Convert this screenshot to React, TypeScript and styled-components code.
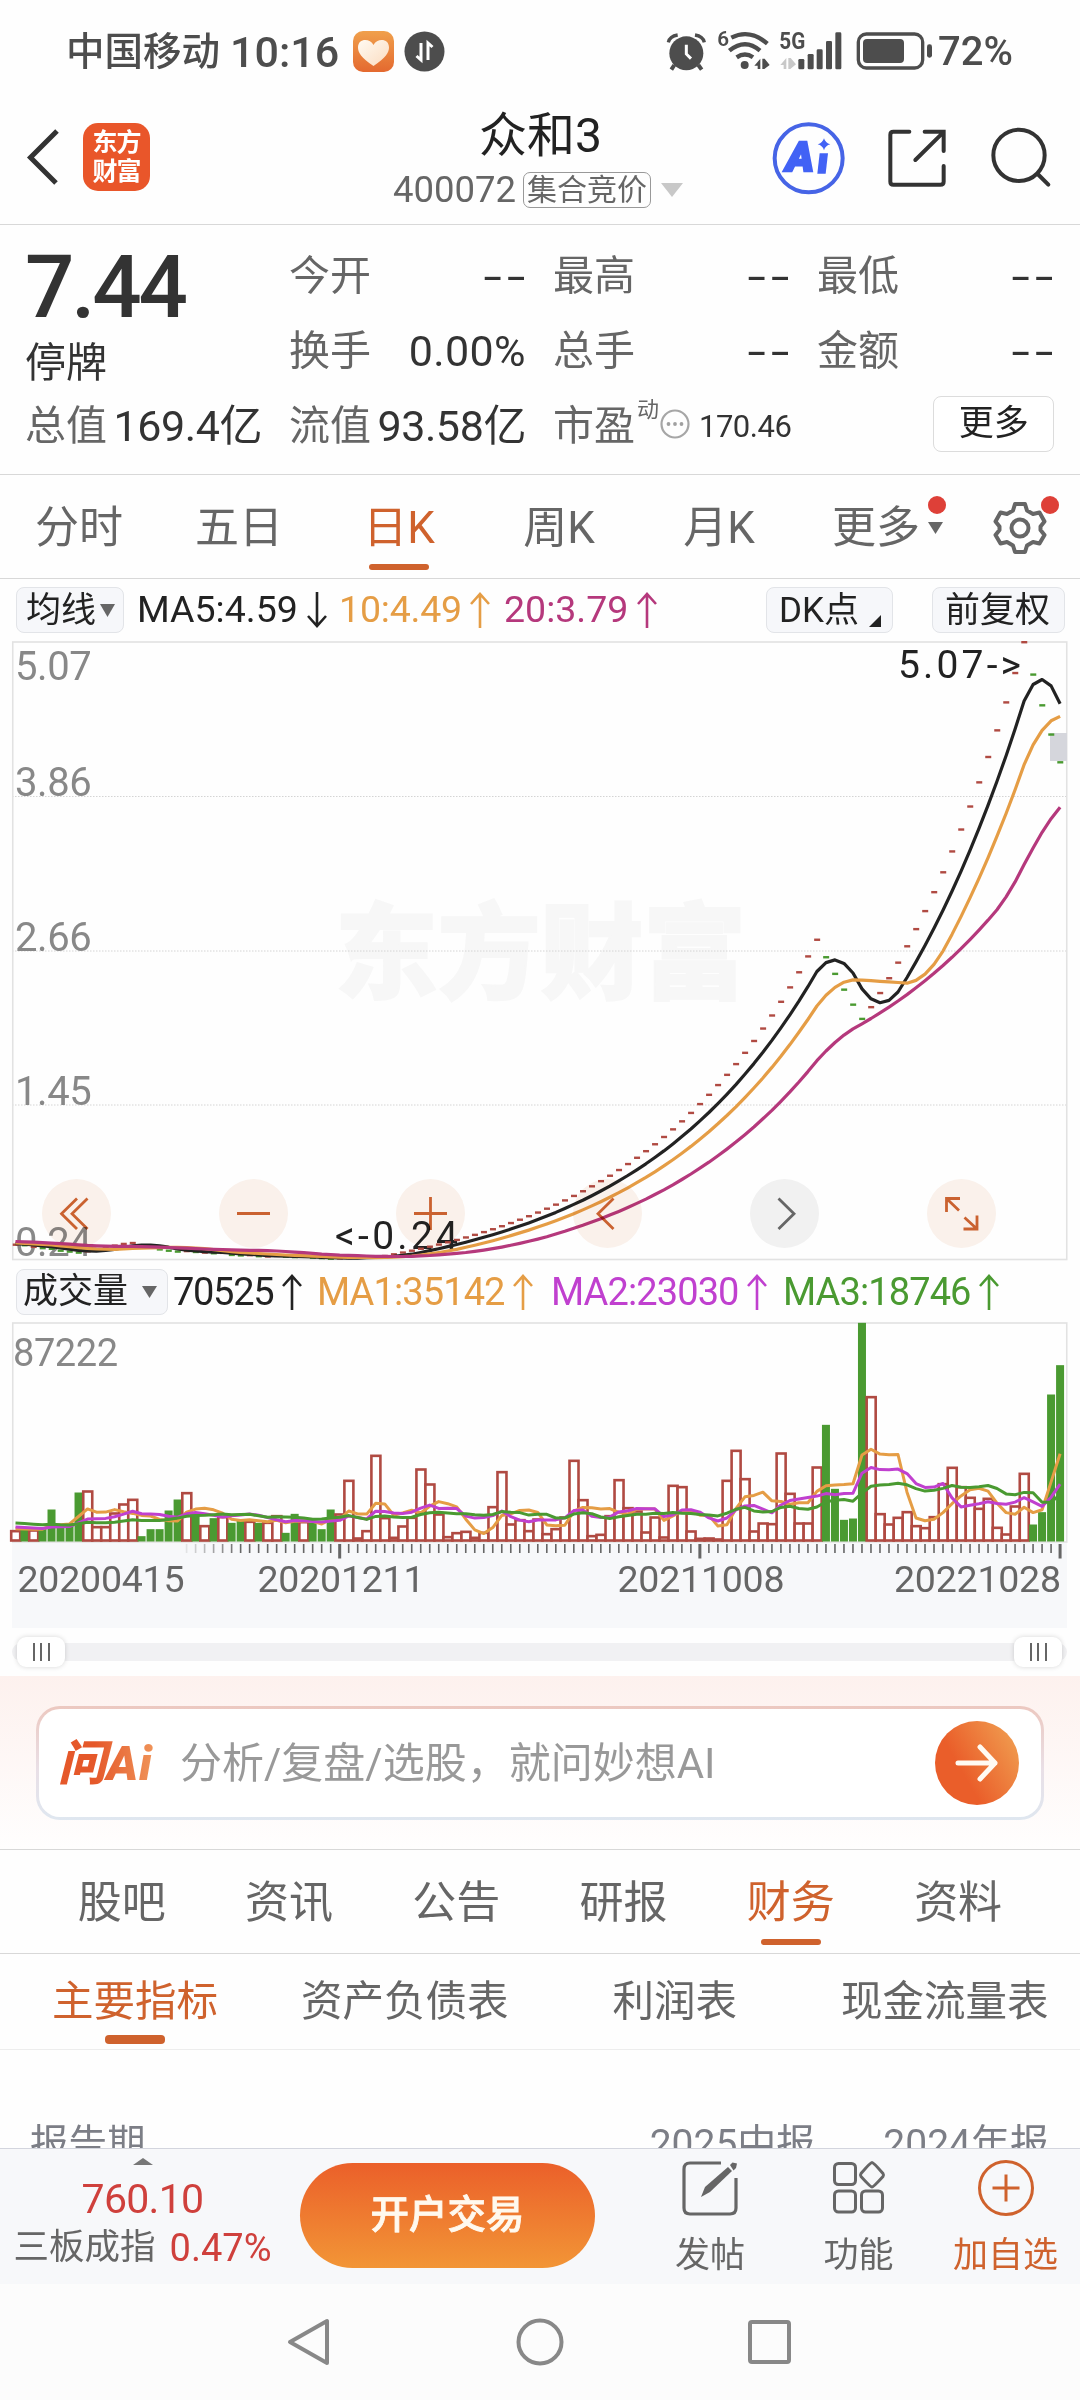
import React from 'react';
import styled, { createGlobalStyle } from 'styled-components';

const FONT = `Roboto, "Noto Sans CJK SC", sans-serif`;
const ACCENT = '#cf622d';
const GREY = '#666666';
const INK = '#222222';
const ORANGE = '#e59d45';
const MAGENTA = '#b5387c';
const PURPLE = '#c040cf';
const GREEN = '#4a9a31';
const RED = '#b04a42';

const Global = createGlobalStyle`
  * { box-sizing: border-box; }
  body { margin: 0; background: #fefefe; font-family: ${FONT}; }
  svg { display: block; flex: none; overflow: visible; }
`;

const Screen = styled.main`
  width: 1080px;
  height: 2400px;
  overflow: hidden;
  display: flex;
  flex-direction: column;
  color: ${INK};
  line-height: 1;
  white-space: nowrap;
`;

const Label = styled.span<{ $s: number; $c?: string; $w?: number; $ls?: number; $ml?: number }>`
  font-size: ${p => p.$s}px;
  color: ${p => p.$c ?? 'inherit'};
  font-weight: ${p => p.$w ?? 400};
  letter-spacing: ${p => p.$ls ?? 0}px;
  margin-left: ${p => p.$ml ?? 0}px;
  line-height: 1;
`;

/* ---------- status bar ---------- */
const StatusBar = styled.header`
  height: 92px;
  padding: 12px 67px 0 66px;
  display: flex;
  align-items: center;
  justify-content: space-between;
  color: #4d4d4d;
`;
const StatusGroup = styled.div`
  display: flex;
  align-items: center;
`;

function StatusIcons() {
  return (
    <svg width="271" height="46" viewBox="54 26 813 138" fill="#4d4d4d">
      <circle cx="112" cy="99" r="51" />
      <path d="M58 66Q62 48 86 44M166 66Q162 48 138 44" stroke="#4d4d4d" strokeWidth="10" fill="none" />
      <path d="M76 134L67 148M148 134L158 148" stroke="#4d4d4d" strokeWidth="12" />
      <path d="M112 73V101L126 115" stroke="#fff" strokeWidth="9" fill="none" />
      <text x="205" y="78" fontSize="62" fontWeight="600" fontFamily={FONT}>6</text>
      <g fill="none" stroke="#4d4d4d" strokeWidth="13">
        <path d="M247 52Q302 24 355 70" />
        <path d="M241 91Q289 52 333 91" />
        <path d="M263 111Q288 94 312 111" />
      </g>
      <circle cx="287" cy="134" r="12" />
      <path d="M316 136L334 115V146H326V136ZM340 115H347L362 134L346 146H340Z" />
      <text x="391" y="87" fontSize="70" fontWeight="700" fontFamily={FONT} textLength="78" lengthAdjust="spacingAndGlyphs">5G</text>
      <path d="M394 134L412 113V146H404V134ZM418 113H425L441 132L424 146H418Z" fill="#c8c8c8" />
      <rect x="448" y="116" width="18" height="31" rx="4" />
      <rect x="476" y="101" width="18" height="46" rx="4" />
      <rect x="503" y="87" width="18" height="60" rx="4" />
      <rect x="531" y="62" width="18" height="85" rx="4" />
      <rect x="559" y="36" width="18" height="111" rx="4" />
      <rect x="628" y="41" width="193" height="102" rx="24" fill="none" stroke="#4d4d4d" strokeWidth="10" />
      <rect x="642" y="56" width="123" height="72" rx="12" />
      <rect x="834" y="72" width="15" height="40" rx="7" />
    </svg>
  );
}

/* ---------- title bar ---------- */
const TitleBar = styled.header`
  height: 133px;
  padding: 0 32px 0 25px;
  display: grid;
  grid-template-columns: 125px 1fr 276px;
  border-bottom: 1.5px solid #d8d8d8;
`;
const BackGroup = styled.div`
  display: flex;
  gap: 25px;
  padding-top: 31px;
`;
const Logo = styled.div`
  width: 68px;
  height: 68px;
  border-radius: 15px;
  background: #e9562a;
  color: #fff;
  display: flex;
  flex-direction: column;
  align-items: center;
  justify-content: center;
  gap: 2px;
  font-weight: 700;
  font-size: 25px;
  letter-spacing: -1px;
  line-height: 27px;
`;
const TitleColumn = styled.div`
  display: flex;
  flex-direction: column;
  padding: 20px 0 0 243px;
`;
const SubTitle = styled.div`
  display: flex;
  align-items: center;
  height: 38px;
  margin-top: 11px;
`;
const Tag = styled.span`
  border: 1.5px solid #999;
  border-radius: 7px;
  height: 36px;
  width: 128px;
  margin: 0 10px 0 7px;
  font-size: 30px;
  line-height: 34px;
  text-align: center;
  color: ${GREY};
`;
const HeaderIcons = styled.div`
  display: flex;
  align-items: flex-start;
  padding-top: 27px;
`;

/* ---------- quote ---------- */
const Quote = styled.section`
  height: 250px;
  border-bottom: 1.5px solid #d8d8d8;
  display: grid;
  grid-template-columns: 237px 237px 237px 237px;
  grid-template-rows: 75px 75px 75px;
  column-gap: 27px;
  padding: 14px 0 0 25px;
  align-items: center;
`;
const PriceCell = styled.div`
  grid-row: span 2;
  align-self: start;
  display: flex;
  flex-direction: column;
  padding-top: 5px;
`;
const Cell = styled.div`
  display: flex;
  justify-content: space-between;
  align-items: center;
`;
const Dashes = styled.span`
  font-size: 43px;
  color: #333;
  letter-spacing: 3.3px;
  display: inline-block;
  transform: scaleX(1.54);
  transform-origin: right center;
  margin-right: -4px;
`;
const WideCell = styled.div`
  grid-column: span 2;
  display: flex;
  align-items: center;
`;
const Sup = styled.sup`
  font-size: 22px;
  line-height: 1;
  color: ${GREY};
  align-self: flex-start;
  margin: -3px 0 0 2px;
  vertical-align: baseline;
`;
const MoreButton = styled.button`
  width: 124px;
  height: 56px;
  margin: -6px 0 0 142px;
  border: 1.5px solid #dcdcdc;
  border-radius: 8px;
  background: #fff;
  font: 400 35px/50px ${FONT};
  color: ${INK};
  padding: 0;
`;

/* ---------- tabs ---------- */
const KTabs = styled.nav`
  height: 104px;
  border-bottom: 1.5px solid #d8d8d8;
  display: grid;
  grid-template-columns: repeat(6, 160px) 1fr;
  margin-left: -1px;
`;
const Tab = styled.div<{ $on?: boolean; $size: number; $bottom: number; $shift?: number; $bar?: number; $pl?: number; $ml?: number }>`
  position: relative;
  display: flex;
  align-items: center;
  justify-content: center;
  font-size: ${p => p.$size}px;
  padding-top: ${p => p.$shift ?? 2}px;
  padding-left: ${p => p.$pl ?? 0}px;
  margin-left: ${p => p.$ml ?? 0}px;
  color: ${p => (p.$on ? ACCENT : GREY)};
  &::after {
    content: '';
    display: ${p => (p.$on ? 'block' : 'none')};
    position: absolute;
    left: 50%;
    margin-left: -30px;
    bottom: ${p => p.$bottom}px;
    width: 60px;
    height: ${p => p.$bar ?? 6}px;
    border-radius: 4px;
    background: ${ACCENT};
  }
`;
const Dot = styled.i<{ $r: number; $t: number }>`
  position: absolute;
  width: 18px;
  height: 18px;
  border-radius: 50%;
  background: #de4038;
  right: ${p => p.$r}px;
  top: ${p => p.$t}px;
`;

/* ---------- chart ---------- */
const LegendRow = styled.div<{ $h: number; $pt?: number }>`
  height: ${p => p.$h}px;
  padding: ${p => p.$pt ?? 0}px 16px 0;
  display: flex;
  align-items: center;
`;
const Pill = styled.div<{ $w: number; $ml?: number; $pl?: number }>`
  position: relative;
  width: ${p => p.$w}px;
  height: 46px;
  margin-left: ${p => p.$ml ?? 0}px;
  padding-left: ${p => p.$pl ?? 9}px;
  border: 1.5px solid #e2e4e8;
  border-radius: 8px;
  background: #f6f7fa;
  display: flex;
  align-items: center;
  font-size: 35px;
  flex: none;
`;
const Slot = styled.div<{ $w: number; $c: string }>`
  width: ${p => p.$w}px;
  display: flex;
  align-items: center;
  color: ${p => p.$c};
  flex: none;
`;
const PriceArea = styled.div`
  position: relative;
  height: 619px;
`;
const Controls = styled.div`
  position: absolute;
  left: 42px;
  top: 538px;
  display: flex;
  gap: 108px;
  mix-blend-mode: multiply;
`;
const Control = styled.div<{ $grey?: boolean }>`
  width: 69px;
  height: 69px;
  border-radius: 50%;
  background: ${p => (p.$grey ? '#f2f2f2' : '#fbf2ec')};
`;
const AxisRow = styled.div`
  height: 85px;
  margin: 0 13px 0 12px;
  background: #f7f8fa;
`;
const SliderRow = styled.div`
  height: 48px;
  padding: 0 12px;
  display: flex;
  align-items: center;
`;
const SliderTrack = styled.div`
  width: 1055px;
  height: 18px;
  border-radius: 9px;
  background: #f1f1f3;
  display: flex;
  align-items: center;
  justify-content: space-between;
  padding: 0 5px;
`;
const Handle = styled.div`
  width: 48px;
  height: 30px;
  border-radius: 9px;
  background: #fff;
  box-shadow: 0 0 5px rgba(0, 0, 0, 0.16);
  display: flex;
  align-items: center;
  justify-content: center;
  gap: 5.5px;
`;
const Grip = styled.i`
  width: 2px;
  height: 18px;
  background: #666;
`;

/* ---------- AI prompt ---------- */
const Banner = styled.section`
  height: 173px;
  padding: 30px 36px 0;
  background: linear-gradient(#fdf1ee, #fffefe);
`;
const PromptBorder = styled.div`
  width: 1008px;
  height: 114px;
  padding: 3px;
  border-radius: 24px;
  background: linear-gradient(#ecc8c0, #e9dfe6 55%, #dfe7f0);
`;
const Prompt = styled.div`
  height: 108px;
  border-radius: 21px;
  background: #fff;
  display: flex;
  align-items: center;
  padding: 2px 22px 0 19px;
`;
const AskLogo = styled.div`
  width: 122px;
  font-size: 48px;
  line-height: 56px;
  font-weight: 900;
  font-style: italic;
  letter-spacing: 0.6px;
  background: linear-gradient(90deg, #e5582a 30%, #f0955a 80%);
  background-clip: text;
  -webkit-background-clip: text;
  color: transparent;
`;
const Go = styled.div`
  width: 84px;
  height: 84px;
  margin: -2px 0 0 auto;
  border-radius: 50%;
  background: linear-gradient(60deg, #ea5e2a 35%, #f09a4e 90%);
  display: flex;
  align-items: center;
  justify-content: center;
`;

/* ---------- info tabs ---------- */
const InfoTabs = styled.nav`
  height: 105px;
  border-top: 1.5px solid #d8d8d8;
  border-bottom: 1.5px solid #d8d8d8;
  display: grid;
  grid-template-columns: repeat(6, 167.3px);
  padding-left: 38px;
`;
const SubTabs = styled.nav`
  height: 96px;
  border-bottom: 1.5px solid #ededed;
  display: flex;
`;
const TableHead = styled.div`
  height: 98px;
  overflow: hidden;
  display: grid;
  grid-template-columns: 1fr auto auto;
  column-gap: 68px;
  padding: 75px 31px 0 30px;
  color: #7c7e86;
`;

/* ---------- bottom ---------- */
const BottomBar = styled.footer`
  height: 136px;
  background: #f7f8fa;
  border-top: 1.5px solid #d3d5de;
  display: flex;
`;
const IndexBox = styled.div`
  width: 300px;
  flex: none;
  padding: 9px 24px 0 9px;
  display: flex;
  flex-direction: column;
  align-items: center;
`;
const TradeButton = styled.button`
  width: 295px;
  height: 105px;
  flex: none;
  margin-top: 14px;
  padding: 0;
  border: 0;
  border-radius: 53px;
  background: linear-gradient(#eb602a, #f29536);
  color: #fff9ee;
  font: 500 38.5px/1 ${FONT};
  -webkit-text-stroke: 0.8px #fff9ee;
`;
const Action = styled.div<{ $w: number; $c?: string; $ml?: number }>`
  width: ${p => p.$w}px;
  margin-left: ${p => p.$ml ?? 0}px;
  flex: none;
  display: flex;
  flex-direction: column;
  align-items: center;
  justify-content: space-between;
  padding: 10px 0 11px;
  color: ${p => p.$c ?? GREY};
`;
const NavBar = styled.footer`
  height: 116px;
  background: #fcfcfc;
  display: flex;
  justify-content: center;
`;

/* ---------- data ---------- */
const N = 117;
const X = (i: number) => 15.5 + 9.005 * i;

const early = [
  0.352, 0.348, 0.335, 0.325, 0.32, 0.305, 0.298, 0.29, 0.3, 0.315, 0.33, 0.345, 0.358, 0.365, 0.348,
  0.33, 0.315, 0.305, 0.298, 0.302, 0.295, 0.29, 0.285, 0.288, 0.272, 0.268, 0.27, 0.262, 0.26, 0.264,
  0.258, 0.255, 0.258, 0.25, 0.247, 0.242, 0.245, 0.248, 0.253, 0.262,
];
const prices: number[] = [];
for (let i = 0; i < N; i++) {
  if (i < 40) prices.push(early[i]);
  else if (i <= 89) prices.push(2.74 / Math.pow(1.05, 89 - i));
  else if (i <= 94) prices.push(2.74 * Math.pow(0.95, i - 89));
  else if (i <= 112) prices.push(5.07 / Math.pow(1.05, 112 - i));
  else prices.push(5.07 * Math.pow(0.95, i - 112));
}

const volA = [
  34, 36, 36, 39, 96, 44, 49, 147, 153, 46, 46, 87, 114, 128, 16, 37, 37, 93, 126, 148, 82, 49, 70, 76, 56,
  62, 62, 56, 59, 79, 26, 83, 61, 56, 37, 96, 84, 185, 12, 34, 260, 73, 14, 48, 74, 219, 174, 84, 16, 28,
  32, 14, 29, 106, 211, 54, 67, 34, 69,
];
const volB = [
  25, 40, 75, 245, 127, 19, 23, 79, 187, 103, 93, 30, 75, 15, 170, 166, 33, 11, 12, 9, 185, 275, 190, 33,
  57, 55, 267, 146, 57, 57, 225, 350, 158, 65, 69, 656, 436, 85, 54, 74, 91, 49, 43, 76, 175, 224, 166, 134,
  101, 131, 44, 24, 108, 206, 51, 88, 441, 529,
];
const volumes = [...volA, ...volB].map(v => v / 3);
const greens = new Set([
  1, 3, 4, 5, 6, 7, 14, 15, 16, 17, 18, 20, 22, 24, 25, 27, 30, 31, 33, 34, 35, 90, 91, 92, 93, 94, 113, 114,
  115, 116,
]);

const movingAverage = (data: number[], before: number[], n: number) => {
  const all = [...before, ...data];
  return data.map((_, i) => {
    const end = i + before.length + 1;
    return all.slice(end - n, end).reduce((a, b) => a + b, 0) / n;
  });
};
const priceBefore = Array.from({ length: 20 }, (_, i) => 0.4 - i * 0.0022);
const volBefore = [
  ...Array(10).fill(23), ...Array(5).fill(17), ...Array(5).fill(13),
] as number[];

const PY = (p: number) => 618 - (p - 0.24) * 127.7;
const VY = (v: number) => 219.5 - v;
const points = (data: number[], y: (v: number) => number) =>
  data.map((v, i) => `${X(i).toFixed(1)},${y(v).toFixed(1)}`).join(' ');

function PriceChart() {
  const grid = [155.5, 310, 464];
  const labels: [string, number][] = [
    ['5.07', 38.5], ['3.86', 154.5], ['2.66', 309.5], ['1.45', 464], ['0.24', 614.5],
  ];
  const lines: [number, string][] = [[5, INK], [10, ORANGE], [20, MAGENTA]];
  return (
    <svg width="1080" height="619" fontFamily={FONT}>
      <text x="335" y="350" fontSize="104" fontWeight="900" fill="#f7f7f7" stroke="#f7f7f7" strokeWidth="2" textLength="411" lengthAdjust="spacingAndGlyphs">东方财富</text>
      {grid.map(y => (
        <line key={y} x1="12" x2="1067" y1={y} y2={y} stroke="#d4d4d4" strokeWidth="1" strokeDasharray="1.5 1.5" />
      ))}
      <rect x="12.75" y="1" width="1054" height="617.5" fill="none" stroke="#e2e2e2" strokeWidth="1.6" />
      <rect x="1050" y="92" width="17" height="28" fill="#d5d6dc" />
      {labels.map(([t, y]) => (
        <text key={t} x="15" y={y} fontSize="40" letterSpacing="-0.4" fill="#888">{t}</text>
      ))}
      <text x="898" y="36.5" fontSize="39" fill={INK} textLength="123">5.07-&gt;</text>
      <text x="335" y="608" fontSize="39" fill={INK} textLength="123">&lt;-0.24</text>
      {prices.map((p, i) => (
        <rect key={i} x={X(i) - 2.8} y={PY(p) - 1.2} width="6" height="2.4" fill={greens.has(i) ? GREEN : RED} />
      ))}
      {lines.map(([n, c]) => (
        <polyline key={n} points={points(movingAverage(prices, priceBefore, n), PY)} fill="none" stroke={c} strokeWidth="3.2" strokeLinejoin="round" />
      ))}
    </svg>
  );
}

function VolumeChart() {
  const lines: [number, string][] = [[5, ORANGE], [10, PURPLE], [20, GREEN]];
  return (
    <svg width="1080" height="221" fontFamily={FONT}>
      <rect x="12.75" y="1" width="1054" height="219" fill="none" stroke="#e2e2e2" strokeWidth="1.6" />
      <text x="13" y="43.5" fontSize="38" fill="#888" textLength="105">87222</text>
      {volumes.map((v, i) =>
        greens.has(i) ? (
          <rect key={i} x={X(i) - 4} y={VY(v)} width="8" height={v} fill={GREEN} />
        ) : (
          <rect key={i} x={X(i) - 4.3} y={VY(v) + 1} width="9" height={Math.max(v - 2, 1)} fill="#fff" stroke={RED} strokeWidth="2.6" />
        ),
      )}
      {lines.map(([n, c]) => (
        <polyline key={n} points={points(movingAverage(volumes, volBefore, n), VY)} fill="none" stroke={c} strokeWidth="3" strokeLinejoin="round" />
      ))}
    </svg>
  );
}

function DateAxis() {
  const dates: [string, number][] = [
    ['20200415', 17.5], ['20201211', 257.5], ['20211008', 617.5], ['20221028', 894],
  ];
  const major = [36, 76, 116];
  return (
    <svg width="1055" height="85" viewBox="12 0 1055 85" fontFamily={FONT}>
      {Array.from({ length: N - 19 }, (_, k) => k + 19).map(i => {
        const m = major.includes(i);
        return (
          <rect key={i} x={X(i) - (m ? 1.5 : 0.8)} y="1" width={m ? 3 : 1.6} height={m ? 14.5 : 9} fill="#666" opacity={Math.min(1, (i - 18) / 7)} />
        );
      })}
      {dates.map(([t, x]) => (
        <text key={t} x={x} y="48.5" fontSize="37.5" fill={GREY} textLength="167">{t}</text>
      ))}
    </svg>
  );
}

const ArrowIcon = styled.svg<{ $ml: number }>`
  margin-left: ${p => p.$ml}px;
`;
function Arrow({ down, color, ml }: { down?: boolean; color: string; ml: number }) {
  return (
    <ArrowIcon $ml={ml} width="20" height="36" viewBox="0 0 20 36" fill="none" stroke={color} strokeWidth="2.6">
      <path d={down ? 'M10 0V34M1 24L10 34L19 24' : 'M10 36V2M1 12L10 2L19 12'} />
    </ArrowIcon>
  );
}

function Triangle({ w, h, color, ml = 0, up }: { w: number; h: number; color: string; ml?: number; up?: boolean }) {
  return (
    <ArrowIcon $ml={ml} width={w} height={h} viewBox="0 0 10 10" preserveAspectRatio="none">
      <path d={up ? 'M0 10H10L5 0Z' : 'M0 0H10L5 10Z'} fill={color} />
    </ArrowIcon>
  );
}

const PriceState = styled.div`
  margin-top: 12px;
  font-size: 41px;
  color: #333;
`;
const CornerMark = styled.svg`
  margin: 22px 0 0 10px;
`;
const InfoMark = styled.svg`
  margin: -5px 0 0 1px;
`;
const IndexValue = styled.div`
  margin-top: 14px;
  font-size: 41px;
  letter-spacing: -0.7px;
  color: #cf403c;
`;
const IndexRow = styled.div`
  margin-top: 9px;
  display: flex;
  align-items: center;
`;

const glyphs = [
  'M35 19.5L19.500 34.8L35 50M45.5 19.5L30 34.8L45.5 50',
  'M18 34.5H51',
  'M18 34.5H51M34.5 18V51',
  'M40.5 19.5L25 34.8L40.5 50',
  'M28.5 19.5L44 34.8L28.5 50',
  'M33 19.5H19.5V33M20 20L32 31.5M50 36.5V50H36.5M50 50L37.5 38.5',
];

export default function App() {
  return (
    <Screen>
      <Global />
      <StatusBar>
        <StatusGroup>
          <Label $s={38.5} $w={500}>中国移动</Label>
          <Label $s={43} $w={500} $ml={10}>10:16</Label>
          <ArrowIcon $ml={14} width="92" height="42" viewBox="0 0 92 42">
            <defs>
              <linearGradient id="heart" x2="0" y2="1">
                <stop offset="0" stopColor="#f0a04c" />
                <stop offset="1" stopColor="#e4692f" />
              </linearGradient>
              <linearGradient id="heartFill" x1="0" x2="1" y1="0" y2="1">
                <stop offset="0" stopColor="#fffaf2" />
                <stop offset="1" stopColor="#fbdcc0" />
              </linearGradient>
            </defs>
            <rect width="41" height="41" rx="10" fill="url(#heart)" />
            <path d="M20.5 35C8 27 5 21 5 16.5C5 7 17 7 20.5 14C24 7 36 7 36 16.5C36 21 33 27 20.5 35Z" fill="url(#heartFill)" />
            <circle cx="71.5" cy="20.5" r="20" fill="#4d4d4d" />
            <path d="M68 12V29L63.5 25M75 29V12L79.5 16" stroke="#fff" strokeWidth="3" fill="none" />
          </ArrowIcon>
        </StatusGroup>
        <StatusGroup>
          <StatusIcons />
          <Label $s={40} $w={500}>72%</Label>
        </StatusGroup>
      </StatusBar>

      <TitleBar>
        <BackGroup>
          <svg width="33" height="68" viewBox="0 0 33 68" fill="none" stroke="#333" strokeWidth="5">
            <path d="M32 8L5.5 34.5L31 60" />
          </svg>
          <Logo><span>东方</span><span>财富</span></Logo>
        </BackGroup>
        <TitleColumn>
          <Label $s={48} $ml={86}>众和3</Label>
          <SubTitle>
            <Label $s={36.5} $c={GREY}>400072</Label>
            <Tag>集合竞价</Tag>
            <Triangle w={22} h={14} color="#c8c8c8" />
          </SubTitle>
        </TitleColumn>
        <HeaderIcons>
          <svg width="286" height="78" viewBox="365 294 858 234" fill="none" stroke="#333" strokeWidth="12" strokeLinecap="round">
            <circle cx="475" cy="412" r="102" stroke="#4664e6" />
            <text x="407" y="451" fontSize="124" fontWeight="900" fontStyle="italic" fill="#4262f5" stroke="#4262f5" strokeWidth="7" textLength="84" lengthAdjust="spacingAndGlyphs" fontFamily={FONT}>A</text>
            <path d="M508 397H533L526 458H501Z" fill="#4262f5" stroke="none" />
            <path d="M521 352Q525 366 540 370Q525 374 521 388Q517 374 502 370Q517 366 521 352Z" fill="#4262f5" stroke="none" />
            <path d="M777 332H729Q720 332 720 341V482Q720 491 729 491H870Q880 491 880 482V435M823 332H880V390M878 335L795 417" />
            <circle cx="1106" cy="403" r="77" />
            <path d="M1162 459L1194 491" />
          </svg>
        </HeaderIcons>
      </TitleBar>

      <Quote>
        <PriceCell>
          <Label $s={87} $w={500} $ls={-3.2} $c="#333">7.44</Label>
          <PriceState>停牌</PriceState>
        </PriceCell>
        {[['今开', '--'], ['最高', '--'], ['最低', '--'], ['换手', '0.00%'], ['总手', '--'], ['金额', '--']].map(([k, v]) => (
          <Cell key={k}>
            <Label $s={41} $c={GREY}>{k}</Label>
            {v === '--' ? <Dashes>--</Dashes> : <Label $s={43} $c="#333" $ls={0.4}>{v}</Label>}
          </Cell>
        ))}
        <Cell>
          <Label $s={41} $c={GREY}>总值</Label>
          <Label $s={43} $c="#333" $ls={-0.4}>169.4亿</Label>
        </Cell>
        <Cell>
          <Label $s={41} $c={GREY}>流值</Label>
          <Label $s={43} $c="#333" $ls={-0.4}>93.58亿</Label>
        </Cell>
        <WideCell>
          <Label $s={41} $c={GREY}>市盈</Label>
          <Sup>动</Sup>
          <InfoMark width="30" height="30" viewBox="0 0 30 30">
            <circle cx="15" cy="15" r="13.5" fill="none" stroke="#a6a6a6" strokeWidth="2.2" />
            <g fill="#a0a0a0"><circle cx="8.5" cy="15" r="1.9" /><circle cx="15" cy="15" r="1.9" /><circle cx="21.5" cy="15" r="1.9" /></g>
          </InfoMark>
          <Label $s={31} $c="#333" $ls={-0.5} $ml={9}>170.46</Label>
          <MoreButton>更多</MoreButton>
        </WideCell>
      </Quote>

      <KTabs>
        {['分时', '五日', '日K', '周K', '月K'].map(t => (
          <Tab key={t} $size={44} $bottom={8} $on={t === '日K'}>{t}</Tab>
        ))}
        <Tab $size={44} $bottom={7} $pl={17}>
          更多
          <Triangle w={15} h={12} color={GREY} ml={8} />
          <Dot $r={13} $t={21} />
        </Tab>
        <Tab $size={44} $bottom={7}>
          <svg width="54" height="54" viewBox="0 0 54 54" fill="none" stroke={GREY} strokeWidth="4" strokeLinejoin="round">
            <path d="M22 3H32L34 9.500L40 13L46.500 11.500L51.500 20.500L47.500 25.500V29L51.500 34L46.500 42.500L40 41L34 44.500L32 51H22L20 44.500L14 41L7.500 42.500L2.500 34L6.500 29V25.500L2.500 20.500L7.500 11.500L14 13L20 9.500Z" />
            <circle cx="27" cy="27" r="8.5" />
          </svg>
          <Dot $r={21} $t={21} />
        </Tab>
      </KTabs>

      <LegendRow $h={62}>
        <Pill $w={108}>均线<Triangle w={15} h={13} color={GREY} ml={4} /></Pill>
        <Slot $w={204} $c={INK}><Label $s={37.5} $ml={13}>MA5:4.59</Label><Arrow down color={INK} ml={9} /></Slot>
        <Slot $w={164} $c={ORANGE}><Label $s={37.5} $ls={-0.2} $ml={11}>10:4.49</Label><Arrow color={ORANGE} ml={8} /></Slot>
        <Slot $w={174} $c={MAGENTA}><Label $s={37.5} $ls={0} $ml={12}>20:3.79</Label><Arrow color={MAGENTA} ml={9} /></Slot>
        <Pill $w={127} $ml={100} $pl={12}>
          DK点
          <CornerMark width="12" height="12"><path d="M12 0V12H0Z" fill={INK} /></CornerMark>
        </Pill>
        <Pill $w={133} $ml={39} $pl={12}>前复权</Pill>
      </LegendRow>

      <PriceArea>
        <PriceChart />
        <Controls>
          {glyphs.map((d, i) => (
            <Control key={d} $grey={i === 4}>
              <svg width="69" height="69" fill="none" stroke={i === 4 ? GREY : '#cb6230'} strokeWidth="2.8"><path d={d} /></svg>
            </Control>
          ))}
        </Controls>
      </PriceArea>

      <LegendRow $h={62} $pt={1}>
        <Pill $w={152} $pl={6}>成交量<Triangle w={15} h={12} color={GREY} ml={14} /></Pill>
        <Slot $w={150} $c={INK}><Label $s={38} $ls={-1.3} $ml={5}>70525</Label><Arrow color={INK} ml={9} /></Slot>
        <Slot $w={233} $c={ORANGE}><Label $s={38} $ls={-0.9} $ml={-1}>MA1:35142</Label><Arrow color={ORANGE} ml={8} /></Slot>
        <Slot $w={232} $c={PURPLE}><Label $s={38} $ls={-0.9}>MA2:23030</Label><Arrow color={PURPLE} ml={8} /></Slot>
        <Slot $w={232} $c={GREEN}><Label $s={38} $ls={-0.9}>MA3:18746</Label><Arrow color={GREEN} ml={8} /></Slot>
      </LegendRow>
      <VolumeChart />
      <AxisRow><DateAxis /></AxisRow>
      <SliderRow>
        <SliderTrack>
          <Handle><Grip /><Grip /><Grip /></Handle>
          <Handle><Grip /><Grip /><Grip /></Handle>
        </SliderTrack>
      </SliderRow>

      <Banner>
        <PromptBorder>
          <Prompt>
            <AskLogo>问Ai</AskLogo>
            <Label $s={42} $c="#999">分析/复盘/选股，就问妙想AI</Label>
            <Go>
              <svg width="44" height="40" viewBox="0 0 44 40" fill="none" stroke="#fffaf2" strokeWidth="5" strokeLinecap="round" strokeLinejoin="round">
                <path d="M3 20H40M25 4L40 20L25 36" />
              </svg>
            </Go>
          </Prompt>
        </PromptBorder>
      </Banner>

      <InfoTabs>
        {['股吧', '资讯', '公告', '研报', '财务', '资料'].map(t => (
          <Tab key={t} $size={44} $bottom={8} $shift={3} $on={t === '财务'}>{t}</Tab>
        ))}
      </InfoTabs>
      <SubTabs>
        {([['主要指标', 52], ['资产负债表', 83], ['利润表', 104], ['现金流量表', 104]] as [string, number][]).map(([t, ml]) => (
          <Tab key={t} $size={41.5} $bottom={5} $bar={9} $shift={0} $ml={ml} $on={t === '主要指标'}>{t}</Tab>
        ))}
      </SubTabs>
      <TableHead>
        <Label $s={38.5}>报告期</Label>
        <Label $s={39}>2025中报</Label>
        <Label $s={39}>2024年报</Label>
      </TableHead>

      <BottomBar>
        <IndexBox>
          <Triangle w={20} h={7} color="#777" up />
          <IndexValue>760.10</IndexValue>
          <IndexRow>
            <Label $s={35.5} $c={GREY}>三板成指</Label>
            <Label $s={38} $c="#cf403c" $ml={14}>0.47%</Label>
          </IndexRow>
        </IndexBox>
        <TradeButton>开户交易</TradeButton>
        <Action $w={230}>
          <svg width="60" height="58" viewBox="0 0 60 58" fill="none" stroke={GREY} strokeWidth="3.2">
            <path d="M41 4H10Q4 4 4 10V49Q4 55 10 55H50Q56 55 56 49V19" />
            <path d="M21 38L25 28L48 8L52 12L30 33Z" fill={GREY} stroke="none" />
            <path d="M50 6L52.5 3.5L57 4.5L56 9L53.5 11.5Z" fill={GREY} stroke="none" />
          </svg>
          <Label $s={35}>发帖</Label>
        </Action>
        <Action $w={67}>
          <svg width="56" height="58" viewBox="0 0 56 58" fill="none" stroke={GREY} strokeWidth="3">
            <rect x="3.5" y="4.5" width="21" height="21" rx="4" />
            <path d="M41 3.5Q42.5 3.5 52 14.5Q53 16 52 17.5Q42.5 28 41 28Q39.500 28 30 17.5Q29 16 30 14.5Q39.500 3.5 41 3.5Z" />
            <rect x="3.5" y="32" width="21" height="21" rx="4" />
            <rect x="30.5" y="32" width="21" height="21" rx="4" />
          </svg>
          <Label $s={35}>功能</Label>
        </Action>
        <Action $w={149} $ml={39} $c={ACCENT}>
          <svg width="60" height="58" viewBox="0 0 60 58" fill="none" stroke={ACCENT} strokeWidth="3">
            <circle cx="30" cy="29" r="26.5" />
            <path d="M16.5 29H43.5M30 15.5V42.5" />
          </svg>
          <Label $s={35}>加自选</Label>
        </Action>
      </BottomBar>
      <NavBar>
        <svg width="510" height="116" viewBox="285 0 510 116" fill="none" stroke="#888" strokeWidth="4" strokeLinejoin="round">
          <path d="M327 37V79L290 58Z" />
          <circle cx="540" cy="58" r="21.5" />
          <rect x="750" y="38" width="39" height="40" rx="2" />
        </svg>
      </NavBar>
    </Screen>
  );
}
